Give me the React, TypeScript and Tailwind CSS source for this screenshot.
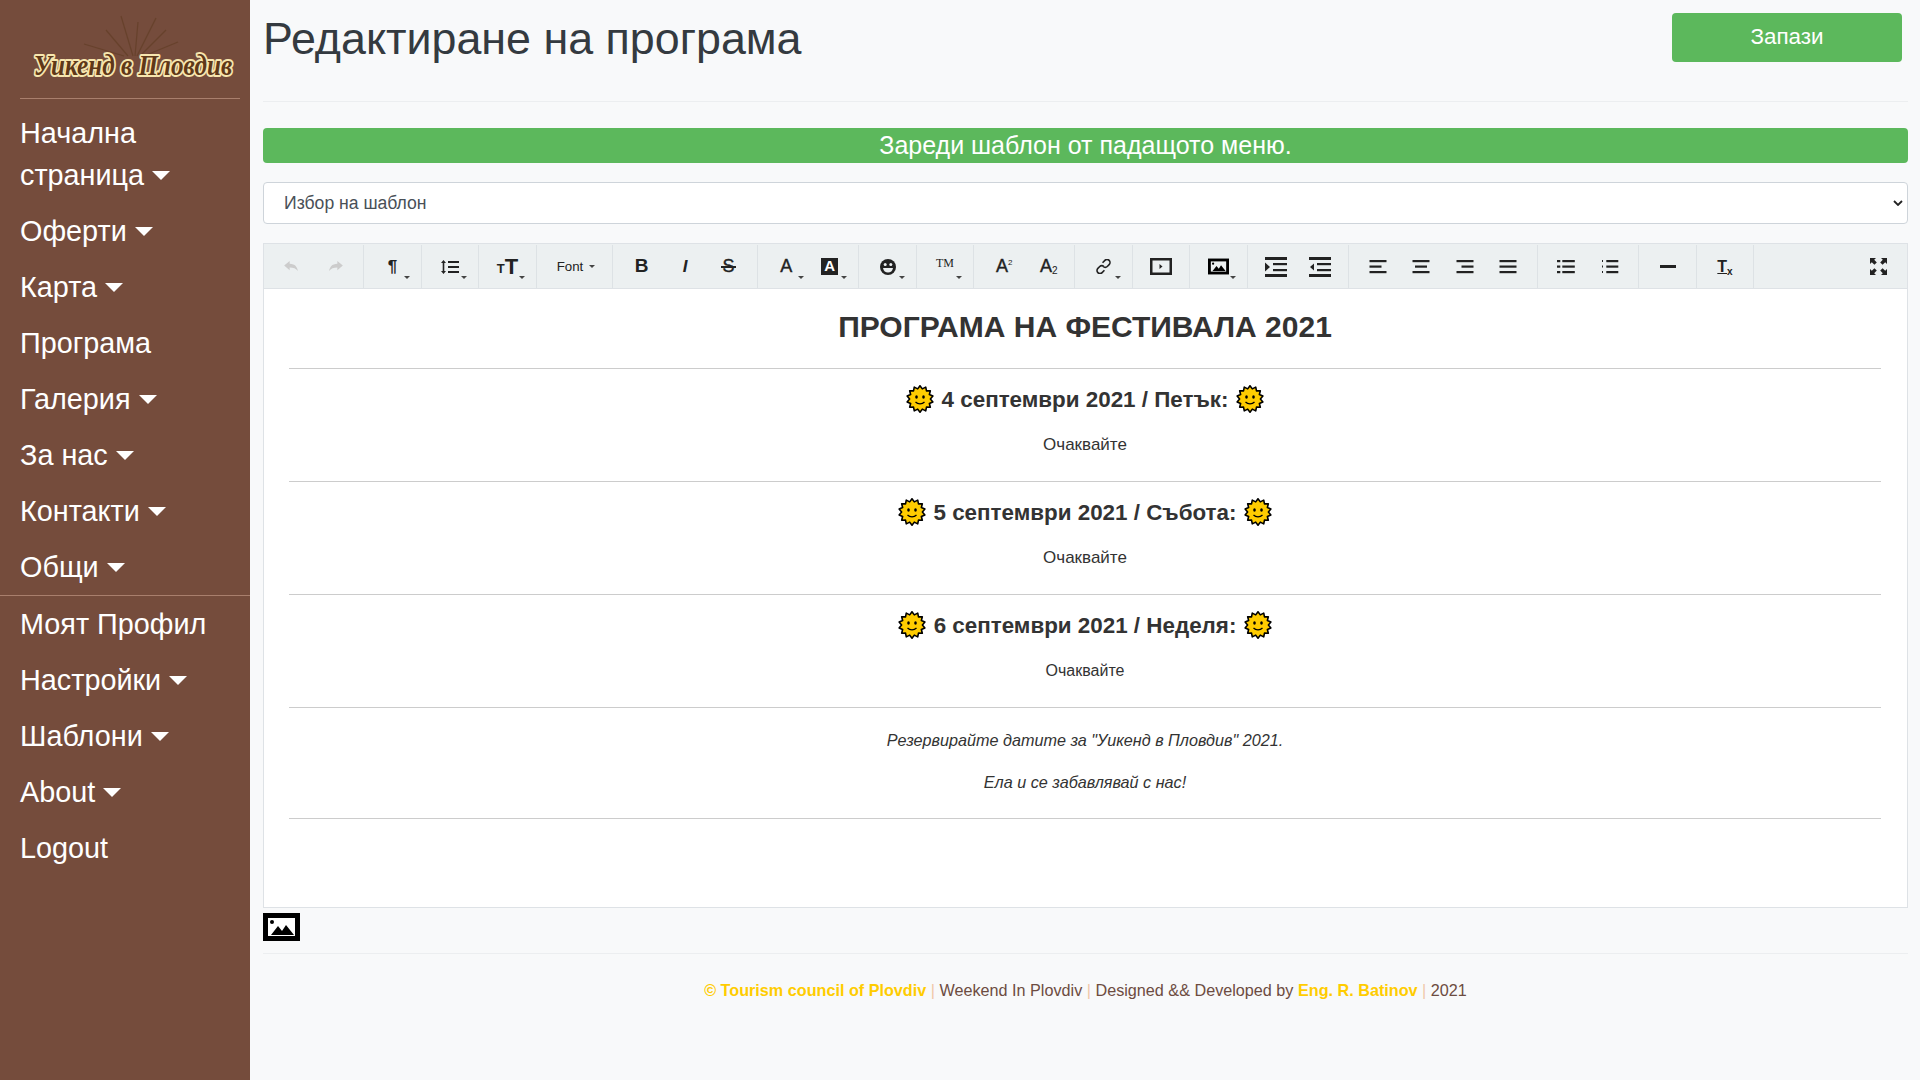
import React from 'react';

const menuTop = [
  { label: 'Начална страница', caret: true, wrap: true },
  { label: 'Оферти', caret: true },
  { label: 'Карта', caret: true },
  { label: 'Програма', caret: false },
  { label: 'Галерия', caret: true },
  { label: 'За нас', caret: true },
  { label: 'Контакти', caret: true },
  { label: 'Общи', caret: true },
];

const menuBottom = [
  { label: 'Моят Профил', caret: false },
  { label: 'Настройки', caret: true },
  { label: 'Шаблони', caret: true },
  { label: 'About', caret: true },
  { label: 'Logout', caret: false },
];

const MenuItem = ({ label, caret, wrap }: { label: string; caret: boolean; wrap?: boolean }) => (
  <a className="block px-5 py-[7px] text-[28.8px] leading-[42px] text-white">
    {wrap ? (
      <>
        Начална
        <br />
        страница
      </>
    ) : (
      label
    )}
    {caret && (
      <span className="ml-[8px] inline-block align-[5px] border-x-[9px] border-t-[9px] border-x-transparent border-t-white" />
    )}
  </a>
);

const Logo = () => (
  <svg viewBox="0 0 220 90" className="h-[90px] w-[220px]">
    <g stroke="#5f3b22" strokeWidth="1.2" opacity="0.6">
      <line x1="113" y1="48" x2="101" y2="8" />
      <line x1="115" y1="48" x2="118" y2="14" />
      <line x1="117" y1="48" x2="136" y2="10" />
      <line x1="108" y1="48" x2="86" y2="22" />
      <line x1="120" y1="48" x2="146" y2="22" />
      <line x1="104" y1="48" x2="64" y2="36" />
      <line x1="124" y1="48" x2="158" y2="34" />
    </g>
    <text
      transform="translate(113 67) scale(0.84 1)"
      textAnchor="middle"
      fontFamily="'Liberation Serif', serif"
      fontStyle="italic"
      fontWeight="700"
      fontSize="30"
      fill="#5f3818"
      stroke="#f7e6ae"
      strokeWidth="4"
      paintOrder="stroke"
      strokeLinejoin="round"
    >
      Уикенд в Пловдив
    </text>
  </svg>
);

const sunPoints = Array.from({ length: 28 }, (_, i) => {
  const r = i % 2 === 0 ? 13.2 : 10.4;
  const a = (i * Math.PI) / 14;
  return `${(14 + r * Math.sin(a)).toFixed(2)},${(14 - r * Math.cos(a)).toFixed(2)}`;
}).join(' ');

const Sun = () => (
  <svg viewBox="0 0 28 28" className="mx-[1.5px] inline-block h-[28px] w-[28px] align-[-6px]">
    <polygon points={sunPoints} fill="#ffcc00" stroke="#000" strokeWidth="1.6" strokeLinejoin="round" />
    <ellipse cx="10.5" cy="12" rx="1.3" ry="1.7" fill="#000" />
    <ellipse cx="17.5" cy="12" rx="1.3" ry="1.7" fill="#000" />
    <path d="M9.5 17c2.5 2.6 6.500 2.600 9 0" fill="none" stroke="#000" strokeWidth="1.3" />
  </svg>
);

const Btn = ({ children, caret, className }: { children: React.ReactNode; caret?: boolean; className?: string }) => (
  <span className={`relative flex h-full w-[43.5px] shrink-0 items-center justify-center text-[#222] ${className ?? ''}`}>
    {children}
    {caret && (
      <span className="absolute bottom-[9px] left-[33px] border-x-[3.5px] border-t-[3.5px] border-x-transparent border-t-[#444]" />
    )}
  </span>
);

const Bars = ({ rows }: { rows: [number, number][] }) => (
  <svg viewBox="0 0 18 15" className="h-[15px] w-[18px]" fill="#222">
    {rows.map(([x, w], i) => (
      <rect key={i} x={x} y={i * 5.5 + 1} width={w} height="2.2" />
    ))}
  </svg>
);

const ImageIcon = ({ className, fill = '#fff' }: { className: string; fill?: string }) => (
  <svg viewBox="0 0 37 28" className={className}>
    <rect x="2.5" y="2.5" width="32" height="23" fill={fill} stroke="#000" strokeWidth="5" />
    <circle cx="9" cy="9" r="2" fill="#000" />
    <path d="M8 22l7-9 4 5 4-6 8 10z" fill="#000" />
  </svg>
);

const Group = ({ w, children }: { w: string; children: React.ReactNode }) => (
  <div className={`flex h-[43px] shrink-0 justify-center border-r border-[#dde2e5] ${w}`}>{children}</div>
);

const Toolbar = () => (
  <div className="flex h-[46px] items-start border border-[#dee2e6] bg-[#ecf0f1] pt-[1px]">
    <Group w="w-[100px]">
      <Btn>
        <svg viewBox="0 0 16 12" className="h-[11px] w-[15px]" fill="#ccc">
          <path d="M6 0L0 5l6 5V7c4 0 7 1 9 4-.5-4-3-8-9-8z" />
        </svg>
      </Btn>
      <Btn>
        <svg viewBox="0 0 16 12" className="h-[11px] w-[15px]" fill="#ccc">
          <path d="M10 0l6 5-6 5V7c-4 0-7 1-9 4 .5-4 3-8 9-8z" />
        </svg>
      </Btn>
    </Group>
    <Group w="w-[58px]">
      <Btn caret className="text-[17px] font-bold">¶</Btn>
    </Group>
    <Group w="w-[57px]">
      <Btn caret>
        <svg viewBox="0 0 18 14" className="h-[14px] w-[18px]" fill="#222">
          <path d="M2.5 0L5 3H3.300v8H5l-2.500 3L0 11h1.700V3H0z" />
          <rect x="7" y="1" width="11" height="2" />
          <rect x="7" y="6" width="11" height="2" />
          <rect x="7" y="11" width="11" height="2" />
        </svg>
      </Btn>
    </Group>
    <Group w="w-[58px]">
      <Btn caret className="font-bold leading-none">
        <span className="mt-[4px] text-[13px]">T</span>
        <span className="text-[22px]">T</span>
      </Btn>
    </Group>
    <Group w="w-[76px]">
      <Btn className="w-full gap-[6px] pl-[3px] text-[13.3px] text-[#3a4654]">
        Font
        <span className="border-x-[3.5px] border-t-[3.5px] border-x-transparent border-t-[#444]" />
      </Btn>
    </Group>
    <Group w="w-[145px]">
      <Btn className="text-[19px] font-bold">B</Btn>
      <Btn className="text-[17px] font-bold italic">I</Btn>
      <Btn className="text-[18px] [-webkit-text-stroke:0.4px_#222]">
        S
        <span className="absolute left-[14px] top-[21px] h-[1.5px] w-[15px] bg-[#222]" />
      </Btn>
    </Group>
    <Group w="w-[101px]">
      <Btn caret className="text-[18px] [-webkit-text-stroke:0.4px_#222]">A</Btn>
      <Btn caret>
        <span className="flex h-[17px] w-[17px] items-center justify-center bg-[#222] text-[15px] font-bold text-white">A</span>
      </Btn>
    </Group>
    <Group w="w-[58px]">
      <Btn caret>
        <svg viewBox="0 0 16 16" className="h-[16px] w-[16px]">
          <circle cx="8" cy="8" r="8" fill="#222" />
          <circle cx="5.2" cy="5.5" r="1.5" fill="#ecf0f1" />
          <circle cx="10.8" cy="5.5" r="1.5" fill="#ecf0f1" />
          <path d="M3 9h10c-.5 3-2.500 4.500-5 4.500S3.500 12 3 9z" fill="#ecf0f1" />
        </svg>
      </Btn>
    </Group>
    <Group w="w-[57px]">
      <Btn caret className="pb-[8px] font-['Liberation_Serif',serif] text-[12px]">TM</Btn>
    </Group>
    <Group w="w-[101px]">
      <Btn className="ml-[5px] text-[18px] [-webkit-text-stroke:0.4px_#222]">
        A<span className="mb-[7px] text-[8px] [-webkit-text-stroke:0]">2</span>
      </Btn>
      <Btn className="ml-[1px] text-[18px] [-webkit-text-stroke:0.4px_#222]">
        A<span className="mt-[8px] text-[10px] [-webkit-text-stroke:0]">2</span>
      </Btn>
    </Group>
    <Group w="w-[58px]">
      <Btn caret>
        <svg viewBox="0 0 16 16" className="h-[15px] w-[15px]" fill="none" stroke="#222" strokeWidth="1.7">
          <path d="M7 4l2.500-2.500a3 3 0 014.500 4.500L12 8a3 3 0 01-4.300 0" />
          <path d="M9 12l-2.500 2.500A3 3 0 012 10l2-2a3 3 0 014.300 0" />
        </svg>
      </Btn>
    </Group>
    <Group w="w-[57px]">
      <Btn>
        <svg viewBox="0 0 22 17" className="h-[17px] w-[22px]">
          <rect x="1.25" y="1.25" width="19.5" height="14.5" fill="none" stroke="#222" strokeWidth="2.5" />
          <path d="M9.500 6l3 2.500-3 2.500z" fill="#222" />
        </svg>
      </Btn>
    </Group>
    <Group w="w-[58px]">
      <Btn caret>
        <ImageIcon className="h-[17px] w-[21px]" fill="#ecf0f1" />
      </Btn>
    </Group>
    <Group w="w-[101px]">
      <Btn>
        <svg viewBox="0 0 22 20" className="h-[20px] w-[22px]" fill="#222">
          <rect width="22" height="3" />
          <rect y="17" width="22" height="3" />
          <rect x="8" y="6" width="14" height="2.200" />
          <rect x="8" y="12" width="14" height="2.200" />
          <path d="M0 5.500l5 4.500-5 4.500z" />
        </svg>
      </Btn>
      <Btn>
        <svg viewBox="0 0 22 20" className="h-[20px] w-[22px]" fill="#222">
          <rect width="22" height="3" />
          <rect y="17" width="22" height="3" />
          <rect x="8" y="6" width="14" height="2.200" />
          <rect x="8" y="12" width="14" height="2.200" />
          <path d="M5 6.500L1 10l4 3.500z" />
        </svg>
      </Btn>
    </Group>
    <Group w="w-[189px]">
      <Btn><Bars rows={[[0.5, 17], [0.5, 12], [0.5, 17]]} /></Btn>
      <Btn><Bars rows={[[0.5, 17], [3, 12], [0.5, 17]]} /></Btn>
      <Btn><Bars rows={[[0.5, 17], [5.5, 12], [0.5, 17]]} /></Btn>
      <Btn><Bars rows={[[0.5, 17], [0.5, 17], [0.5, 17]]} /></Btn>
    </Group>
    <Group w="w-[101px]">
      <Btn>
        <svg viewBox="0 0 18 15" className="h-[15px] w-[18px]" fill="#222">
          <rect y="1" width="3.300" height="2.200" />
          <rect y="6.500" width="3.300" height="2.200" />
          <rect y="12" width="3.300" height="2.200" />
          <rect x="5.300" y="1" width="12.500" height="2.200" />
          <rect x="5.300" y="6.500" width="12.500" height="2.200" />
          <rect x="5.300" y="12" width="12.500" height="2.200" />
        </svg>
      </Btn>
      <Btn>
        <svg viewBox="0 0 18 15" className="h-[15px] w-[18px]" fill="#222">
          <rect x="1" y="1" width="1" height="2" />
          <rect x="1" y="6.500" width="1" height="2" />
          <rect x="1" y="12" width="1" height="2" />
          <rect x="5.300" y="1" width="12" height="2.200" />
          <rect x="5.300" y="6.500" width="12" height="2.200" />
          <rect x="5.300" y="12" width="12" height="2.200" />
        </svg>
      </Btn>
    </Group>
    <Group w="w-[58px]">
      <Btn>
        <span className="h-[3px] w-[16px] bg-[#222]" />
      </Btn>
    </Group>
    <Group w="w-[57px]">
      <Btn className="text-[16px] font-bold">
        <span className="underline">T</span>
        <span className="mt-[9px] text-[10px]">x</span>
      </Btn>
    </Group>
    <div className="flex h-[43px] flex-1 items-center justify-end pr-[20px]">
      <svg viewBox="0 0 17 17" className="h-[17px] w-[17px]" fill="#222">
        <path d="M0 0h6L4.200 1.800 6.800 4.400 4.400 6.800 1.800 4.200 0 6zM17 0v6l-1.800-1.800-2.600 2.600-2.400-2.400 2.600-2.600L11 0zM0 17v-6l1.800 1.800 2.600-2.600 2.400 2.400-2.600 2.600L6 17zM17 17h-6l1.800-1.800-2.600-2.600 2.400-2.400 2.600 2.600L17 11z" />
      </svg>
    </div>
  </div>
);

const Rule = () => <hr className="border-0 border-t border-[#ccc]" />;

const Day = ({ title, small }: { title: string; small?: boolean }) => (
  <>
    <h3 className="mt-[14px] text-[22.4px] font-bold leading-[34px] text-[#333]">
      <Sun /> {title} <Sun />
    </h3>
    <p className={`mb-[24px] mt-[16px] leading-[24px] text-[#333] ${small ? 'text-[16px]' : 'text-[17px]'}`}>Очаквайте</p>
    <Rule />
  </>
);

const Pipe = () => <span className="text-[#f0c8a8]">|</span>;

export default function App() {
  return (
    <div className="flex h-screen overflow-hidden bg-[#f8f9fa] font-['Liberation_Sans',Arial,sans-serif]">
      <aside className="w-[250px] shrink-0 bg-[#754c3c]">
        <div className="ml-5 mr-2.5 flex h-[99px] items-end justify-center border-b border-[#a97f6d]">
          <Logo />
        </div>
        <nav className="pt-[6px]">
          {menuTop.map((m) => (
            <MenuItem key={m.label} {...m} />
          ))}
        </nav>
        <nav className="border-t border-[#a97f6d]">
          {menuBottom.map((m) => (
            <MenuItem key={m.label} {...m} />
          ))}
        </nav>
      </aside>
      <main className="min-w-0 flex-1 pl-[13px] pr-[12px]">
        <div className="flex h-[102px] items-start justify-between border-b border-[#eceef0] pr-[6px]">
          <h1 className="mt-[14px] text-[44.8px] leading-[48px] text-[#343a40]">Редактиране на програма</h1>
          <button className="mt-[13px] h-[49px] w-[230px] rounded-[4px] bg-[#5cb85c] pb-[2px] text-[22.4px] text-white">Запази</button>
        </div>
        <div className="mt-[26px] h-[35px] rounded-[4px] bg-[#5cb85c] text-center text-[25px] leading-[35px] text-white">
          Зареди шаблон от падащото меню.
        </div>
        <div className="mt-[19px] flex h-[42px] items-center justify-between rounded-[4px] border border-[#ced4da] bg-white pl-[20px] pr-[4px] text-[17.6px] text-[#495057]">
          Избор на шаблон
          <svg viewBox="0 0 10 6" className="h-[6px] w-[10px]" fill="none" stroke="#222" strokeWidth="1.800">
            <path d="M1 1l4 4 4-4" />
          </svg>
        </div>
        <div className="mt-[19px]">
          <Toolbar />
          <div className="h-[619px] border border-t-0 border-[#dee2e6] bg-white pl-[25px] pr-[26px] text-center">
            <h2 className="pb-[19px] pt-[15px] text-[30px] font-bold leading-[45px] text-[#333]">ПРОГРАМА НА ФЕСТИВАЛА 2021</h2>
            <Rule />
            <Day title="4 септември 2021 / Петък:" />
            <Day title="5 септември 2021 / Събота:" />
            <Day title="6 септември 2021 / Неделя:" small />
            <p className="mt-[20px] text-[16.2px] italic leading-[24px] text-[#333]">Резервирайте датите за "Уикенд в Пловдив" 2021.</p>
            <p className="mb-[24px] mt-[18px] text-[16.2px] italic leading-[24px] text-[#333]">Ела и се забавлявай с нас!</p>
            <Rule />
          </div>
        </div>
        <ImageIcon className="mt-[5px] block h-[28px] w-[37px]" />
        <div className="mt-[12px] border-t border-[#eceef0] pt-[24px] text-center text-[16.2px] leading-[24px] text-[#6d4c41]">
          <span className="font-bold text-[#ffcc00]">© Tourism council of Plovdiv</span> <Pipe /> Weekend In Plovdiv <Pipe /> Designed && Developed by{' '}
          <span className="font-bold text-[#ffcc00]">Eng. R. Batinov</span> <Pipe /> 2021
        </div>
      </main>
    </div>
  );
}
